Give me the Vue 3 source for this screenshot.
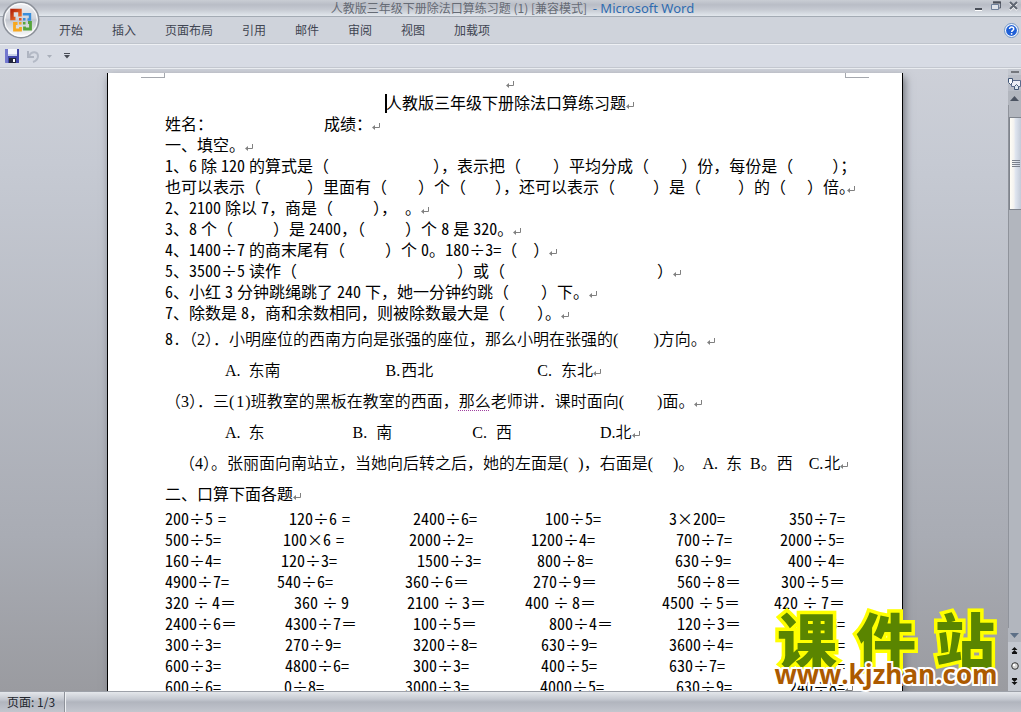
<script setup>
const tabs = ['开始', '插入', '页面布局', '引用', '邮件', '审阅', '视图', '加载项']

// Line notation: {n} is a blank of n pixels, ↵ is a paragraph mark,
// | is the text cursor, _…_ is a grammar underline, ~ halves the mark after it,
// […] is set in the heading face inside a song line.
const tokenPattern = /\{\d+\}|\[[^\]]+\]|_[^_]+_|~.|[÷×↵|]|[0-9A-Z.=()]+|[^[{_~÷×↵|0-9A-Z.=()]+/g

function parse(text) {
  return (text.match(tokenPattern) || []).map((part) => {
    if (part[0] === '{') return { type: 'gap', width: Number(part.slice(1, -1)) }
    if (part[0] === '[') return { type: 'hei', text: part.slice(1, -1) }
    if (part[0] === '_') return { type: 'hint', text: part.slice(1, -1) }
    if (part[0] === '~') return { type: 'half', text: part.slice(1) }
    if (part === '÷' || part === '×') return { type: 'op', text: part }
    if (part === '↵') return { type: 'mark' }
    if (part === '|') return { type: 'caret' }
    return { type: /^[0-9A-Z.=()]/.test(part) ? 'latin' : 'text', text: part }
  })
}

const line = (kind, text) => ({ kind, cells: [{ tokens: parse(text) }] })

const intro = [
  line('center blank', '↵'),
  line('center', '|人教版三年级下册除法口算练习题↵'),
  line('', '姓名：{111}成绩：↵'),
  line('', '一、填空。↵'),
  line('', '1、6{4}除{4}120{4}的算式是（{104}），表示把（{32}）平均分成（{32}）份，每份是（{39}）；'),
  line('', '也可以表示（{46}）里面有（{31}）个（{29}），还可以表示（{38}）是（{37}）的（{21}）倍~。↵'),
  line('', '2、2100{4}除以{4}7，商是（{40}），{8}。↵'),
  line('', '3、8{4}个（{40}）是{4}2400，（{40}）个{4}8{4}是{4}320。↵'),
  line('', '4、1400÷7{4}的商末尾有（{40}）个{4}0。180÷3=（{16}）↵'),
  line('', '5、3500÷5{4}读作（{160}）或（{152}）↵'),
  line('', '6、小红{4}3{4}分钟跳绳跳了{4}240{4}下，她一分钟约跳（{32}）下。↵'),
  line('', '7、除数是{4}8，商和余数相同，则被除数最大是（{32}）。↵'),
  line('song', '[8.]（2）．小明座位的西南方向是张强的座位，那么小明在张强的({35})方向。↵'),
  line('song', '{60}A.{8}东南{105}B.{1}西北{104}C.{9}东北↵'),
  line('song', '（3）．三({2}1{1})班教室的黑板在教室的西面，_那么_老师讲．课时面向({33})面。↵'),
  line('song', '{60}A.{8}东{88}B.{9}南{80}C.{9}西{88}D.北↵'),
  line('song', '{14}（4）。张丽面向南站立，当她向后转之后，她的左面是({10})，右面是({20})。{8}A.{8}东{8}B。西{16}C.{1}北↵'),
  line('heading', '二、口算下面各题↵'),
]

// Each exercise is [start column in pixels, text].
const exercises = [
  [[0, '200÷5{5}='], [124, '120÷6{5}='], [248, '2400÷6='], [380, '100÷5='], [504, '3×200='], [624, '350÷7=']],
  [[0, '500÷5='], [118, '100×6{5}='], [244, '2000÷2='], [366, '1200÷4='], [511, '700÷7='], [615, '2000÷5=']],
  [[0, '160÷4='], [116, '120÷3='], [252, '1500÷3='], [372, '800÷8='], [510, '630÷9='], [623, '400÷4=']],
  [[0, '4900÷7='], [112, '540÷6='], [240, '360÷6＝'], [368, '270÷9＝'], [512, '560÷8＝'], [616, '300÷5＝']],
  [[0, '320{4}÷{3}4＝'], [129, '360{4}÷{3}9'], [242, '2100{4}÷{3}3＝'], [360, '400{4}÷{3}8＝'], [497, '4500{4}÷{2}5＝'], [609, '420{4}÷{3}7＝']],
  [[0, '2400÷6＝'], [120, '4300÷7＝'], [248, '100÷5＝'], [384, '800÷4＝'], [512, '120÷3＝'], [624, '360÷6=']],
  [[0, '300÷3='], [120, '270÷9='], [248, '3200÷8='], [376, '630÷9='], [504, '3600÷4='], [624, '180÷3=']],
  [[0, '600÷3='], [120, '4800÷6='], [248, '300÷3='], [376, '400÷5='], [504, '630÷7='], [624, '160÷8=']],
  [[0, '600÷6='], [119, '0÷8='], [240, '3000÷3='], [375, '4000÷5='], [511, '630÷9='], [624, '240÷8=↵']],
]

const sums = exercises.map((row) => ({
  kind: 'sums',
  cells: row.map(([start, text], i) => ({
    tokens: parse(text),
    width: i + 1 < row.length ? row[i + 1][0] - start : undefined,
  })),
}))

const lines = [...intro, ...sums]
</script>

<template>
  <div class="window">
    <header class="titlebar">
      <h1 class="caption">人教版三年级下册除法口算练习题 (1) [兼容模式] <span class="app">- Microsoft Word</span></h1>
      <div class="controls">
        <button aria-label="最小化"><svg width="9" height="10" viewBox="0 0 9 10"><path d="M1 8h7" stroke="#4a4f59" stroke-width="2" /><path d="M1 9.500h7" stroke="#fff" /></svg></button>
        <button aria-label="还原"><svg width="10" height="10" viewBox="0 0 10 10"><path d="M2 1h7.500v6H8" fill="none" stroke="#5c6370" /><path d="M2 1.500h8" stroke="#4a4f59" stroke-width="2" /><path d="M.5 3.500h7v5h-7z" fill="#dfe3ea" stroke="#6e7f99" /></svg></button>
        <button aria-label="关闭"><svg width="10" height="10" viewBox="0 0 10 10"><path d="M1 2l7 7M8 2L1 9" stroke="#fff" stroke-width="2" /><path d="M1 1l7 7M8 1L1 8" stroke="#5f6672" stroke-width="2" /></svg></button>
      </div>
    </header>

    <nav class="tabs">
      <button v-for="tab in tabs" :key="tab" class="tab">{{ tab }}</button>
      <button class="help" aria-label="帮助">
        <svg width="15" height="15" viewBox="0 0 15 15"><circle cx="7.500" cy="7.500" r="7" fill="#f4f8fd" stroke="#6f93c4" /><circle cx="7.500" cy="7.500" r="5.400" fill="#1f5fd6" /><path d="M5.500 6c0-2.600 4.200-2.400 4.200-.1 0 1.500-2 1.500-2 3" fill="none" stroke="#fff" stroke-width="1.500" /><circle cx="7.600" cy="10.800" r=".9" fill="#fff" /></svg>
      </button>
    </nav>

    <div class="quick">
      <button aria-label="保存"><svg width="14" height="14" viewBox="0 0 14 14"><path d="M0 0h14v14H1l-1-1z" fill="#3f46a8" /><path d="M0 0h3v14H1l-1-1z" fill="#7378cf" /><path d="M3 0h9v7H3z" fill="#f3f6fc" /><path d="M3 5h9v2H3z" fill="#c9d3ea" /><path d="M4 9h7v5H4z" fill="#22263c" /><path d="M8 10h2v3H8z" fill="#fff" /></svg></button>
      <button aria-label="撤消"><svg width="12" height="13" viewBox="0 0 12 13"><path d="M1 1v6h6" fill="none" stroke="#aeb4c0" stroke-width="2" /><path d="M2 6c3-6 9-4 9 0 0 3-2 5-5 6" fill="none" stroke="#b4bac6" stroke-width="2" /></svg></button>
      <button aria-label="撤消列表"><svg width="5" height="3" viewBox="0 0 5 3"><path d="M0 0h5L2.500 3z" fill="#a9afba" /></svg></button>
      <button class="more" aria-label="自定义快速访问工具栏"><svg width="6" height="6" viewBox="0 0 6 6"><path d="M0 .5h6" stroke="#484c55" /><path d="M0 2h6L3 5.500z" fill="#484c55" /></svg></button>
    </div>

    <button class="office" aria-label="Office 按钮">
      <svg width="38" height="38" viewBox="0 0 38 38">
        <defs>
          <linearGradient id="orb" x1="0" y1="0" x2="0" y2="1"><stop offset="0" stop-color="#f2f3f6" /><stop offset=".45" stop-color="#d3d6dd" /><stop offset=".5" stop-color="#c3c7cf" /><stop offset="1" stop-color="#fff" /></linearGradient>
          <linearGradient id="red" x1="0" y1="0" x2="1" y2="1"><stop offset="0" stop-color="#b5260c" /><stop offset="1" stop-color="#f4772a" /></linearGradient>
        </defs>
        <circle cx="19" cy="19" r="17.800" fill="url(#orb)" stroke="#8b9099" stroke-width="1.500" />
        <circle cx="19" cy="19" r="16.300" fill="none" stroke="#fff" />
        <path d="M13.500 17.500H10V9.500h8v6" fill="none" stroke="url(#red)" stroke-width="3.500" />
        <path d="M22 14.500v-1.200h6v5.200h-2.500" fill="none" stroke="#3a8fdc" stroke-width="2.400" />
        <path d="M15.500 22.500h-3v6.500h6v-3" fill="none" stroke="#f7a81f" stroke-width="2.800" />
        <path d="M26 21.500h2.500v6.500h-6v-2.500" fill="none" stroke="#56a53b" stroke-width="2.800" />
        <path d="M17 17h2.500v2.500H17z" fill="#e8501c" /><path d="M21 17h2.500v2.500H21z" fill="#3a8fdc" /><path d="M17 21h2.500v2.500H17z" fill="#f7a81f" /><path d="M21 21h2.500v2.500H21z" fill="#56a53b" />
      </svg>
    </button>

    <main class="workspace">
      <div class="desk">
        <article class="page">
          <span class="corner left"></span>
          <span class="corner right"></span>
          <div v-for="(row, r) in lines" :key="r" class="line" :class="row.kind">
            <span v-for="(cell, c) in row.cells" :key="c" class="cell" :style="cell.width ? { width: cell.width + 'px' } : null">
              <template v-for="(t, i) in cell.tokens" :key="i">
                <span v-if="t.type === 'gap'" class="gap" :style="{ width: t.width + 'px' }"></span>
                <svg v-else-if="t.type === 'mark'" class="mark" width="8" height="8" viewBox="0 0 8 8"><path d="M7.500 0v4.500H2" fill="none" stroke="#808080" /><path d="M0 4.500L3 2v5z" fill="#808080" /></svg>
                <span v-else-if="t.type === 'caret'" class="caret"></span>
                <span v-else :class="t.type">{{ t.text }}</span>
              </template>
            </span>
          </div>
        </article>
      </div>

      <aside class="scroller">
        <span class="split"></span>
        <button class="ruler" aria-label="标尺"><svg width="13" height="13" viewBox="0 0 13 13"><path d="M3.500 3.500h9v6h-9z" fill="#eceef6" stroke="#5b6c8d" /><path d="M.5 1.500h4v4l-2 2-2-2z" fill="#f7f9fc" stroke="#435777" /><path d="M6.500 12.500v-3l2-2 2 2v3z" fill="#dbe6ef" stroke="#435777" /></svg></button>
        <button class="step" aria-label="向上滚动"><svg width="9" height="5" viewBox="0 0 9 5"><path d="M4.500 0L9 5H0z" fill="#4b5361" /></svg></button>
        <div class="track">
          <div class="thumb"><i></i><i></i><i></i><i></i></div>
        </div>
        <button class="step" aria-label="向下滚动"><svg width="9" height="5" viewBox="0 0 9 5"><path d="M0 0h9L4.500 5z" fill="#5d6f86" /></svg></button>
        <div class="browse">
          <button aria-label="前一页"><svg width="7" height="7" viewBox="0 0 7 7"><path d="M3.500 0L6.500 3h-6zM3.500 3L6.500 6h-6z" fill="#111" /><path d="M1 6.500h5" stroke="#111" /></svg></button>
          <button aria-label="选择浏览对象"><svg width="8" height="8" viewBox="0 0 8 8"><circle cx="4" cy="4" r="3.300" fill="#d5d5d5" stroke="#333" /><circle cx="3" cy="3" r="1.200" fill="#fff" /></svg></button>
          <button aria-label="下一页"><svg width="7" height="7" viewBox="0 0 7 7"><path d="M1 .5h5" stroke="#111" /><path d="M.5 1h6l-3 3zM.5 4h6l-3 3z" fill="#111" /></svg></button>
        </div>
      </aside>
    </main>

    <footer class="status">
      <span class="pages">页面: 1/3</span>
    </footer>

    <div class="stamp">
      <div class="brand"><span>课</span><span>件</span><span>站</span></div>
      <div class="site">www.kjzhan.com</div>
    </div>
  </div>
</template>

<style>
body {
  overflow: hidden;
}
</style>

<style scoped>
.window {
  position: relative;
  display: flex;
  flex-direction: column;
  height: 100vh;
  overflow: hidden;
  font-family: "Noto Sans CJK SC", sans-serif;
  font-size: 12px;
  color: #3f4552;
  background: #cdd1d9;
}
button {
  display: flex;
  align-items: center;
  justify-content: center;
  padding: 0;
  border: 0;
  background: none;
  font: inherit;
  color: inherit;
}
svg {
  display: block;
}
.titlebar {
  display: flex;
  align-items: center;
  justify-content: center;
  height: 16px;
  flex: none;
  border-bottom: 1px solid #a4abb4;
  background: linear-gradient(#c9cdd4, #b9bdc6 30%, #c6cad2 60%, #e2e7ed);
}
.caption {
  margin: 0 0 0 4px;
  font-size: 12px;
  font-weight: 400;
  line-height: 16px;
  color: #666b75;
  white-space: nowrap;
}
.app {
  margin-left: 3px;
  font-family: "Noto Sans", sans-serif;
  font-size: 13px;
  color: #2f6cb0;
}
.controls {
  position: absolute;
  top: 1px;
  right: 2px;
  display: flex;
  gap: 8px;
}
.tabs {
  display: flex;
  align-items: center;
  gap: 29px;
  height: 26px;
  flex: none;
  padding: 0 2px 0 59px;
  background: #cfd3db;
  border-bottom: 1px solid #bfc4cc;
}
.tab {
  line-height: 24px;
}
.help {
  margin-left: auto;
}
.quick {
  display: flex;
  align-items: center;
  gap: 8px;
  height: 22px;
  flex: none;
  padding-left: 5px;
  background: #d7dbe4;
  border-top: 1px solid #eef0f4;
  border-bottom: 1px solid #c3c7cf;
}
.more {
  margin-left: 4px;
}
.office {
  position: absolute;
  left: 2px;
  top: 1px;
}
.workspace {
  display: flex;
  flex: 1;
  min-height: 0;
  border-top: 1px solid #e9ecf0;
}
.desk {
  flex: 1;
  min-width: 0;
  overflow: hidden;
  padding: 4px 0 0 2px;
  background: linear-gradient(#cdd0d8, #c6cad3 15%, #a9acb4 75%, #9a9ba0);
}
.page {
  position: relative;
  box-sizing: border-box;
  max-width: 796px;
  height: 100%;
  margin: 0 auto;
  padding: 3px 55px 0 57px;
  overflow: hidden;
  border: 1px solid #000;
  border-width: 0 1px;
  box-shadow: 2px 4px 8px #6f7279;
  background: #fff;
  color: #000;
  font-size: 16px;
}
.corner {
  position: absolute;
  top: 0;
  width: 23px;
  height: 4px;
  border-bottom: 1px solid #a5a8ae;
}
.corner.left {
  left: 33px;
  border-right: 1px solid #a5a8ae;
}
.corner.right {
  right: 33px;
  border-left: 1px solid #a5a8ae;
}
.line {
  height: 21px;
  line-height: 21px;
  white-space: nowrap;
}
.latin,
.hei {
  font-feature-settings: "hwid";
}
.center {
  text-align: center;
}
.blank {
  height: 16px;
  line-height: 10px;
}
.song {
  height: 31px;
  line-height: 31px;
  font-weight: 350;
}
.song .latin {
  font-family: "Liberation Serif", serif;
}
.hei {
  font-weight: 400;
}
.heading {
  height: 30px;
  line-height: 30px;
}
.sums {
  display: flex;
}
.sums .cell {
  flex: none;
}
.gap {
  display: inline-block;
}
.op {
  display: inline-block;
  width: 16px;
  text-align: center;
}
.half {
  font-feature-settings: "halt";
}
.hint {
  text-decoration: underline dotted #a040a0 1px;
  text-underline-offset: 3px;
}
.mark {
  display: inline-block;
  margin-right: -8px;
  vertical-align: -1px;
}
.caret {
  display: inline-block;
  width: 2px;
  height: 19px;
  margin-right: -1px;
  margin-left: -1px;
  vertical-align: -4px;
  background: #000;
}
.scroller {
  display: flex;
  flex-direction: column;
  width: 13px;
  flex: none;
  background: #c3c7cf;
}
.split {
  height: 2px;
  margin: 2px 2px 2px 3px;
  background: #74777d;
}
.ruler {
  height: 16px;
  background: #b9bdc6;
}
.step {
  height: 14px;
  background: #b2b6be;
}
.track {
  flex: 1;
  padding-top: 12px;
  border-left: 1px solid #8f939b;
  background: #b2b6be;
}
.thumb {
  display: flex;
  flex-direction: column;
  align-items: center;
  justify-content: center;
  gap: 1px;
  height: 91px;
  border: 1px solid #7f848d;
  border-right: 0;
  background: linear-gradient(90deg, #fffdf5, #f3f2f0 35%, #dfe5ef 50%, #c3cbd8);
}
.thumb i {
  width: 8px;
  height: 1px;
  background: #7b818b;
}
.browse {
  display: flex;
  flex-direction: column;
  align-items: center;
  gap: 8px;
  padding: 5px 0 6px;
  background: #c3c7cf;
}
.status {
  display: flex;
  flex: none;
  height: 20px;
  border-top: 1px solid #9da1a9;
  background: linear-gradient(#e4e7eb, #c6cad2 35%, #b1b5be 50%, #c3c6ce);
}
.pages {
  padding: 0 9px 0 7px;
  border-right: 1px solid #8e929a;
  box-shadow: 1px 0 #eef0f3;
  line-height: 20px;
  color: #22262e;
}
.stamp {
  position: absolute;
  right: 22px;
  bottom: 24px;
  width: 226px;
}
.brand {
  display: flex;
  justify-content: space-between;
  padding: 0 4px;
  font-size: 60px;
  font-weight: 900;
  line-height: 52px;
  color: #5a8500;
  -webkit-text-stroke: 7px #ffff00;
  paint-order: stroke fill;
}
.site {
  margin-top: -4px;
  font-family: "Open Sans", sans-serif;
  font-size: 26px;
  font-weight: 700;
  line-height: 28px;
  text-align: center;
  white-space: nowrap;
  color: #ac5a00;
  -webkit-text-stroke: 4px #fff;
  paint-order: stroke fill;
}
</style>
